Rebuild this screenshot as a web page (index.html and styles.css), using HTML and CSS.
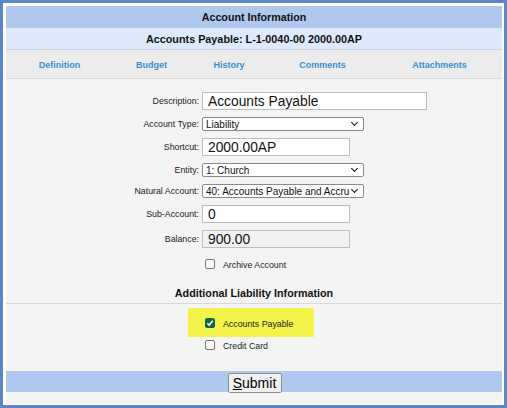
FILE: index.html
```html
<!DOCTYPE html>
<html>
<head>
<meta charset="utf-8">
<link rel="stylesheet" href="styles.css">
</head>
<body>
<div class="frame">
  <div class="panel">
    <div class="title">Account Information</div>
    <div class="subtitle">Accounts Payable: L-1-0040-00 2000.00AP</div>
    <div class="tabs">
      <a class="tab">Definition</a>
      <a class="tab">Budget</a>
      <a class="tab">History</a>
      <a class="tab">Comments</a>
      <a class="tab">Attachments</a>
    </div>
    <div class="body">
      <div class="form">
        <label class="lbl">Description:</label>
        <div class="ctl"><input class="txt big wide" value="Accounts Payable"></div>
        <label class="lbl">Account Type:</label>
        <div class="ctl"><div class="sel">Liability<span class="chev"></span></div></div>
        <label class="lbl">Shortcut:</label>
        <div class="ctl"><input class="txt big mid" value="2000.00AP"></div>
        <label class="lbl">Entity:</label>
        <div class="ctl"><div class="sel">1: Church<span class="chev"></span></div></div>
        <label class="lbl">Natural Account:</label>
        <div class="ctl"><div class="sel tight"><span class="clip">40: Accounts Payable and Accru</span><span class="chev"></span></div></div>
        <label class="lbl">Sub-Account:</label>
        <div class="ctl"><input class="txt big mid" value="0"></div>
        <label class="lbl">Balance:</label>
        <div class="ctl"><input class="txt big mid ro" value="900.00" readonly></div>
        <div></div>
        <div class="ctl chk-row archive"><span class="box"></span><span class="chk-lbl">Archive Account</span></div>
      </div>
      <div class="section">Additional Liability Information</div>
      <div class="extra">
        <div class="hl">
          <div class="chk-row"><span class="box on"><svg viewBox="0 0 10 10" width="10" height="10"><path d="M2.3 5.2 L4.2 7.1 L7.8 2.8" fill="none" stroke="#fff" stroke-width="1.6"/></svg></span><span class="chk-lbl">Accounts Payable</span></div>
        </div>
        <div class="chk-row cc"><span class="box"></span><span class="chk-lbl">Credit Card</span></div>
      </div>
    </div>
    <div class="submitbar"><button class="btn"><u>S</u>ubmit</button></div>
    <div class="foot"></div>
  </div>
</div>
</body>
</html>
```
FILE: styles.css
```css
* { box-sizing: border-box; }
html, body { margin: 0; padding: 0; }
body {
  width: 507px;
  height: 408px;
  font-family: "Liberation Sans", Arial, sans-serif;
  color: #222;
  background: #fff;
}
.frame {
  width: 507px;
  height: 408px;
  border: 3px solid #5b87c9;
  padding: 3px 2px 1px 3px;
  background: #fff;
}
.panel {
  height: 100%;
  background: #f4f4f4;
  display: flex;
  flex-direction: column;
}
.title {
  height: 22px;
  background: #afc8ee;
  font-weight: bold;
  font-size: 10.7px;
  display: flex;
  align-items: center;
  justify-content: center;
  color: #111;
}
.subtitle {
  height: 22px;
  background: #deeafb;
  font-weight: bold;
  font-size: 10.8px;
  display: flex;
  align-items: center;
  justify-content: center;
  border-bottom: 1px solid #c8d7ef;
  color: #111;
}
.tabs {
  height: 29px;
  background: #ececec;
  border-bottom: 1px solid #dadada;
  display: grid;
  grid-template-columns: 107px 77px 78px 109px 1fr;
  align-items: center;
  padding-top: 1px;
}
.tab {
  text-align: center;
  font-size: 9px;
  color: #3b8fcf;
  font-weight: bold;
}
.body {
  flex: 1;
  display: flex;
  flex-direction: column;
}
.form {
  display: grid;
  grid-template-columns: 193px 1fr;
  column-gap: 3px;
  row-gap: 7px;
  align-items: center;
  margin-top: 13px;
}
.lbl {
  text-align: right;
  font-size: 8.8px;
  color: #222;
}
.ctl { display: flex; align-items: center; }
.txt {
  height: 18px;
  border: 1px solid #bdbdbd;
  background: #fff;
  font-family: "Liberation Sans", Arial, sans-serif;
  padding: 0 5px;
  color: #111;
  margin: 0;
}
.big { font-size: 13.8px; }
.wide { width: 225px; }
.mid { width: 148px; }
.ro { background: #f1f1f1; }
.sel {
  width: 162px;
  height: 14px;
  border: 1px solid #8a8a8a;
  border-radius: 2px;
  background: #fff;
  font-size: 10px;
  padding: 0 18px 0 3px;
  display: flex;
  align-items: center;
  position: relative;
  color: #111;
  white-space: nowrap;
}
.sel.tight { padding-right: 12px; }
.clip { display: block; }
.chev {
  position: absolute;
  right: 6px;
  top: 2px;
  width: 5px;
  height: 5px;
  border-right: 1.6px solid #111;
  border-bottom: 1.6px solid #111;
  transform: rotate(45deg);
}
.chk-row {
  display: flex;
  align-items: center;
  padding-left: 3px;
}
.archive { margin-top: 4px; }
.box {
  width: 10px;
  height: 10px;
  border: 1px solid #767676;
  border-radius: 2px;
  background: #fff;
  display: inline-flex;
  flex: none;
}
.box.on {
  background: #0f6a4a;
  border-color: #0f6a4a;
}
.box svg { display: block; margin: -1px; }
.chk-lbl {
  font-size: 8.8px;
  margin-left: 8px;
  color: #222;
  position: relative;
  top: 1px;
}
.section {
  margin-top: 15px;
  height: 20px;
  padding-top: 3px;
  line-height: 12px;
  border-bottom: 1px solid #d8d8d8;
  text-align: center;
  font-weight: bold;
  font-size: 10.75px;
  color: #111;
}
.extra {
  display: flex;
  flex-direction: column;
  align-items: flex-start;
  padding-left: 182px;
  margin-top: 4px;
}
.hl {
  background: #f4f34a;
  width: 126px;
  height: 29px;
  display: flex;
  align-items: center;
  padding-left: 14px;
}
.cc { padding-left: 17px; margin-top: 3px; }
.submitbar {
  height: 21px;
  background: #afc8ee;
  display: flex;
  justify-content: center;
  align-items: flex-start;
}
.btn {
  margin-top: 2px;
  height: 20px;
  width: 54px;
  padding: 0;
  font-family: "Liberation Sans", Arial, sans-serif;
  font-size: 14px;
  background: #f0f0f0;
  border: 1px solid #8f8f8f;
  border-radius: 2px;
  color: #000;
  margin-left: 1px;
}
.foot { height: 12px; }
```
